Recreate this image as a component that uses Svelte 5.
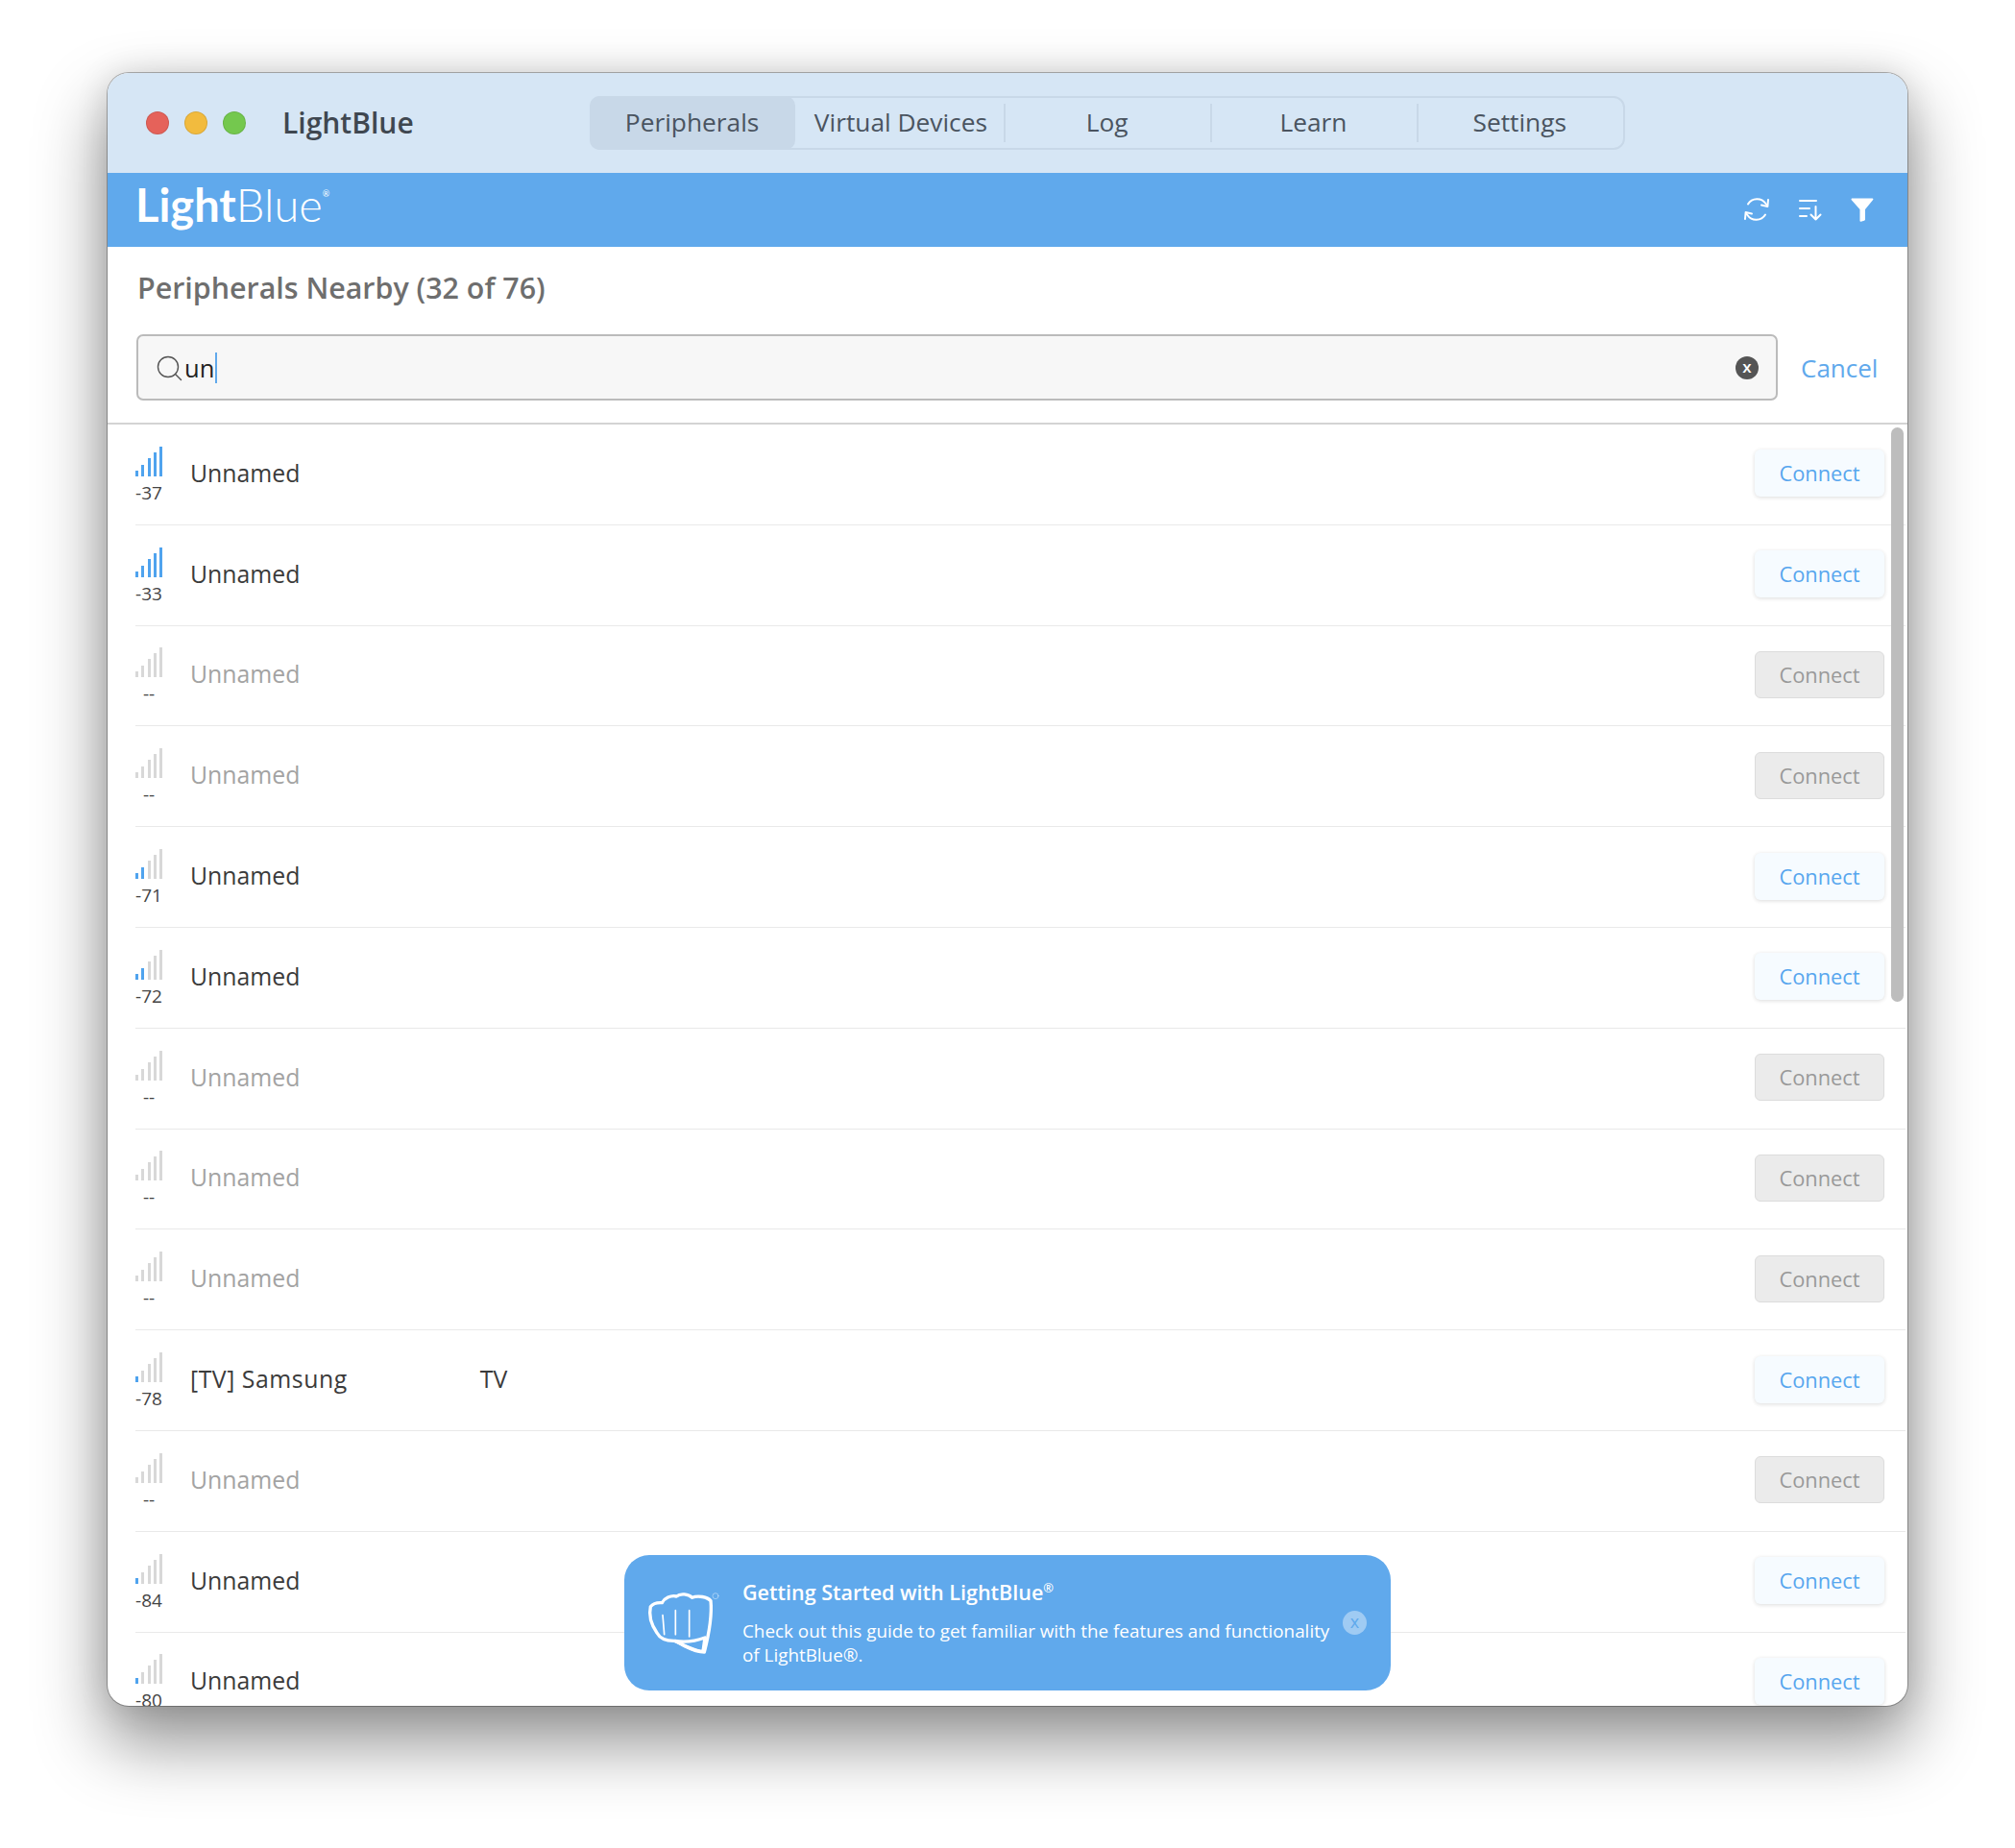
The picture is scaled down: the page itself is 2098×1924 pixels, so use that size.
<script>
    const tabs = ['Peripherals', 'Virtual Devices', 'Log', 'Learn', 'Settings'];

    // level = blue bars out of 5, rssi null means the peripheral is out of range
    const peripherals = [
        { name: 'Unnamed', rssi: -37, level: 5 },
        { name: 'Unnamed', rssi: -33, level: 5 },
        { name: 'Unnamed', rssi: null, level: 0 },
        { name: 'Unnamed', rssi: null, level: 0 },
        { name: 'Unnamed', rssi: -71, level: 2 },
        { name: 'Unnamed', rssi: -72, level: 2 },
        { name: 'Unnamed', rssi: null, level: 0 },
        { name: 'Unnamed', rssi: null, level: 0 },
        { name: 'Unnamed', rssi: null, level: 0 },
        { name: '[TV] Samsung', suffix: 'TV', rssi: -78, level: 1 },
        { name: 'Unnamed', rssi: null, level: 0 },
        { name: 'Unnamed', rssi: -84, level: 1 },
        { name: 'Unnamed', rssi: -80, level: 1 }
    ];

    const barHeights = [6, 12, 19, 25, 31];
</script>

<main class="page">
    <div class="window">
        <header class="titlebar">
            <div class="lights">
                <span class="light red"></span>
                <span class="light yellow"></span>
                <span class="light green"></span>
            </div>
            <span class="app-name">LightBlue</span>
            <nav class="tabs">
                {#each tabs as tab, i}
                    <div class="tab" class:active={i === 0} class:plain={i > 1}>{tab}</div>
                {/each}
            </nav>
        </header>

        <div class="brandbar">
            <div class="logo"><b>Light</b><span>Blue</span><sup>®</sup></div>
            <div class="tools">
                <svg class="tool" width="30" height="30" viewBox="0 0 30 30" fill="none" stroke="#fff" stroke-width="2" stroke-linecap="round" stroke-linejoin="round">
                    <path d="M6 9.500A11 11 0 0 1 24.500 9l1.500 2" />
                    <path d="M27 5l-.6 7-6.400-1.500" />
                    <path d="M24 20.500A11 11 0 0 1 5.500 21L4 19" />
                    <path d="M3 25l.6-7 6.400 1.500" />
                </svg>
                <svg class="tool" width="26" height="26" viewBox="0 0 26 26" fill="none" stroke="#fff" stroke-width="2" stroke-linecap="round" stroke-linejoin="round">
                    <path d="M2 4h17M2 12h10M2 20h7" />
                    <path d="M18.500 10v13.500M13.500 18.500l5 5 5-5" />
                </svg>
                <svg class="tool" width="26" height="26" viewBox="0 0 26 26">
                    <path d="M1.500 2.500C1.500 2 2 1.500 2.500 1.500h21c.8 0 1.200.8.700 1.500L16 13v10.500c0 .6-.5 1-1 1.200l-3.500 1c-.5 0-1-.3-1-1V13L1.800 3.200c-.2-.2-.3-.4-.3-.7z" fill="#fff" />
                </svg>
            </div>
        </div>

        <section class="content">
            <h1>Peripherals Nearby (32 of 76)</h1>
            <div class="search-row">
                <div class="search">
                    <svg width="28" height="28" viewBox="0 0 28 28" fill="none" stroke="#555" stroke-width="1.400" stroke-linecap="round">
                        <circle cx="13" cy="13" r="10.500" />
                        <path d="M20.500 20.500l6 6" />
                    </svg>
                    <span class="query">un</span><span class="caret"></span>
                    <span class="clear">x</span>
                </div>
                <span class="cancel">Cancel</span>
            </div>

            <div class="list">
                {#each peripherals as p}
                    <div class="row" class:away={p.rssi === null}>
                        <div class="signal">
                            <div class="bars">
                                {#each barHeights as h, i}
                                    <span class="bar" class:on={i < p.level} style="height: {h}px"></span>
                                {/each}
                            </div>
                            <span class="rssi">{p.rssi ?? '--'}</span>
                        </div>
                        <div class="name">
                            <span class:wide={p.suffix}>{p.name}</span>
                            {#if p.suffix}<span class="suffix">{p.suffix}</span>{/if}
                        </div>
                        <button class="connect">Connect</button>
                    </div>
                {/each}
                <div class="scrollbar"></div>
            </div>

            <aside class="toast">
                <svg class="fist" width="120" height="100" viewBox="0 0 360 300" fill="none" stroke="#fff" stroke-width="10" stroke-linejoin="round" stroke-linecap="round">
                    <path d="M22 98C30 88 45 85 58 86C65 72 85 62 103 66C115 56 140 58 152 70C170 62 200 68 210 80C214 120 208 170 190 240C170 240 150 232 130 222C115 215 105 205 95 205C70 205 50 195 42 180C28 160 15 130 22 98Z" />
                    <path d="M60 125L65 185M100 110V185M143 110V192" stroke-width="5" />
                    <path d="M98 205C130 210 165 205 192 195L186 238C165 238 135 225 98 205Z" />
                    <circle cx="225" cy="65" r="9" stroke-width="2" opacity="0.6" />
                </svg>
                <div class="toast-text">
                    <h2>Getting Started with LightBlue<sup>®</sup></h2>
                    <p>Check out this guide to get familiar with the features and functionality of LightBlue®.</p>
                </div>
                <span class="toast-close">x</span>
            </aside>
        </section>
    </div>
</main>

<style>
    :global(body) {
        margin: 0;
        background: #fff;
    }

    .page {
        display: block;
        height: 1924px;
        padding: 76px 0 0 112px;
        box-sizing: border-box;
        overflow: hidden;
        font-family: "Open Sans", "Noto Sans", sans-serif;
    }

    .window {
        width: 1874px;
        height: 1700px;
        border-radius: 22px;
        overflow: hidden;
        display: flex;
        flex-direction: column;
        background: #fff;
        box-shadow: 0 0 0 1px rgba(0, 0, 0, 0.28), 0 36px 70px 4px rgba(0, 0, 0, 0.42), 0 0 34px rgba(0, 0, 0, 0.12);
    }

    /* title bar */
    .titlebar {
        height: 104px;
        flex: none;
        display: flex;
        align-items: center;
        background: #d6e6f5;
        position: relative;
    }

    .lights {
        display: flex;
        gap: 16px;
        margin-left: 40px;
    }

    .light {
        width: 24px;
        height: 24px;
        border-radius: 50%;
        box-sizing: border-box;
        border: 1px solid rgba(0, 0, 0, 0.1);
    }

    .red { background: #e5625a; }
    .yellow { background: #f2bb3e; }
    .green { background: #74c84e; }

    .app-name {
        margin-left: 38px;
        margin-bottom: 2px;
        font-size: 30px;
        font-weight: 600;
        color: #3f4750;
    }

    .tabs {
        margin-left: 183px;
        width: 1078px;
        height: 56px;
        box-sizing: border-box;
        display: grid;
        grid-template-columns: repeat(5, 1fr);
        border: 2px solid #c8d8e8;
        border-radius: 12px;
    }

    .tab {
        display: flex;
        align-items: center;
        justify-content: center;
        padding-bottom: 2px;
        font-size: 26.300px;
        color: #4a5460;
        position: relative;
    }

    .tab.active {
        background: #c8d8e8;
        border-radius: 10px;
        margin: -2px 3px -2px -2px;
    }

    .tab.plain::before {
        content: '';
        position: absolute;
        left: 0;
        top: 6px;
        bottom: 6px;
        width: 2px;
        background: #c8d8e8;
    }

    /* brand bar */
    .brandbar {
        height: 77px;
        flex: none;
        display: flex;
        align-items: center;
        justify-content: space-between;
        background: #60a9ec;
        padding: 0 34px 0 29px;
        box-sizing: border-box;
    }

    .logo {
        color: #fff;
        font-family: Lato, sans-serif;
        font-size: 47px;
        line-height: 1;
        display: flex;
        margin-top: -10px;
    }

    .logo b { font-weight: 700; }
    .logo span { font-weight: 300; }

    .logo sup {
        font-size: 9px;
        line-height: 1;
        margin-top: 7px;
    }

    .tools {
        display: flex;
        align-items: center;
        gap: 28px;
        margin-bottom: 2px;
    }

    .tool { display: block; }

    /* content */
    .content {
        flex: 1;
        min-height: 0;
        display: flex;
        flex-direction: column;
        position: relative;
    }

    h1 {
        margin: 22px 0 0 31px;
        height: 42px;
        font-size: 30.400px;
        line-height: 42px;
        font-weight: 600;
        color: #6e6e6e;
    }

    .search-row {
        display: flex;
        align-items: center;
        margin: 27px 0 23px 30px;
    }

    .search {
        width: 1709px;
        height: 69px;
        box-sizing: border-box;
        display: flex;
        align-items: center;
        background: #f7f7f7;
        border: 2px solid #bbb;
        border-radius: 7px;
        padding: 0 18px 0 18px;
    }

    .query {
        margin-left: 2px;
        font-size: 25.500px;
        color: #222;
    }

    .caret {
        width: 2px;
        height: 32px;
        margin-left: 1px;
        background: #60a9ec;
    }

    .clear {
        margin-left: auto;
        width: 24px;
        height: 24px;
        border-radius: 50%;
        background: #555;
        color: #fff;
        font-size: 17px;
        line-height: 21px;
        text-align: center;
        font-weight: 600;
    }

    .cancel {
        margin-left: 24px;
        font-size: 26px;
        color: #60a9ec;
    }

    .list {
        flex: 1;
        min-height: 0;
        overflow: hidden;
        position: relative;
        border-top: 2px solid #d4d4d4;
    }

    .row {
        height: 104.8px;
        box-sizing: border-box;
        display: flex;
        align-items: center;
        margin-left: 29px;
        margin-right: 2px;
        padding-right: 22px;
        border-bottom: 1px solid #e9e9e9;
    }

    .signal {
        width: 30px;
        margin-left: -1px;
        margin-right: 28px;
        display: flex;
        flex-direction: column;
        align-items: center;
        margin-top: 1px;
    }

    .bars {
        display: flex;
        align-items: flex-end;
        gap: 3.200px;
        height: 31px;
    }

    .bar {
        width: 3px;
        background: #d8d8d8;
    }

    .bar.on { background: #4fa3ee; }

    .rssi {
        margin-top: 6px;
        font-size: 19px;
        line-height: 22px;
        color: #444;
    }

    .name {
        flex: 1;
        display: flex;
        margin-bottom: 4px;
        font-size: 24.800px;
        color: #3b3b3b;
    }

    .wide { letter-spacing: 0.55px; }

    .suffix { margin-left: 138px; }

    .away .name { color: #a3a3a3; }

    .connect {
        width: 135px;
        height: 49px;
        padding: 0;
        margin-bottom: 2px;
        font-family: inherit;
        font-size: 21.800px;
        font-weight: 500;
        color: #57a6ee;
        background: #f6fbff;
        border: none;
        border-radius: 6px;
        box-shadow: 0 1px 4px rgba(0, 0, 0, 0.14);
    }

    .away .connect {
        color: #999;
        background: #ebebeb;
        border: 1px solid #dcdcdc;
        box-shadow: none;
    }

    .scrollbar {
        position: absolute;
        left: 1857px;
        top: 3px;
        width: 13px;
        height: 598px;
        border-radius: 7px;
        background: #bdbdbd;
    }

    /* getting started toast */
    .toast {
        position: absolute;
        left: 538px;
        bottom: 16px;
        width: 798px;
        height: 141px;
        box-sizing: border-box;
        display: flex;
        align-items: center;
        padding: 0 25px 0 20px;
        background: #60a9ec;
        border-radius: 26px;
        color: #fff;
    }

    .fist {
        flex: none;
        margin-right: -17px;
    }

    .toast-text { flex: 1; }

    h2 {
        margin: 0 0 13px;
        font-size: 21.500px;
        line-height: 30px;
        font-weight: 600;
    }

    p {
        margin: 0;
        font-size: 18.850px;
        line-height: 25px;
    }

    sup {
        font-size: 0.6em;
        line-height: 0;
    }

    .toast-close {
        flex: none;
        margin-left: 3px;
        width: 25px;
        height: 25px;
        border-radius: 50%;
        background: rgba(255, 255, 255, 0.4);
        color: #60a9ec;
        font-size: 18px;
        line-height: 22px;
        text-align: center;
    }
</style>
